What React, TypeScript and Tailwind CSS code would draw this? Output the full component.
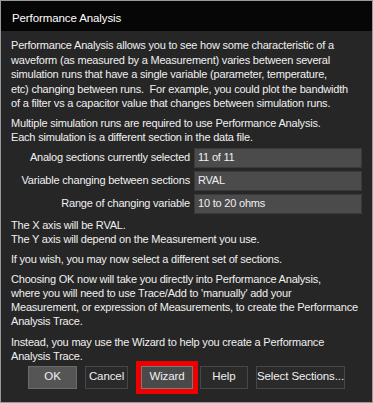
import React from "react";

const font = { fontFamily: '"Liberation Sans", Arial, sans-serif' };

function Row({ label, value }: { label: string; value: string }) {
  return (
    <>
      <div className="flex h-[20px] items-center justify-end whitespace-nowrap">{label}</div>
      <div className="flex h-[20px] items-center border border-[#3a3a3a] bg-[#4b4b4b] pl-[3px] whitespace-nowrap">
        {value}
      </div>
    </>
  );
}

function Btn({
  children,
  width,
  variant = "plain",
}: {
  children: React.ReactNode;
  width: string;
  variant?: "plain" | "default" | "focus";
}) {
  const styles = {
    plain: "bg-[#2a2a2a] border-[#474747]",
    default: "bg-[#555555] border-[#6a6a6a]",
    focus: "bg-[#4a4a4a] border-[#7a7a7a]",
  }[variant];
  return (
    <button
      type="button"
      className={`flex h-[23px] items-center justify-center whitespace-nowrap border ${styles} ${width} text-[11.5px] tracking-[-0.1px] text-[#f0f0f0]`}
      style={font}
    >
      {children}
    </button>
  );
}

export default function App() {
  return (
    <div
      className="flex h-[403px] w-[373px] flex-col border border-[#9a9a9a] bg-[#262626] text-[11px] tracking-[-0.2px] text-[#f0f0f0]"
      style={font}
    >
      <div className="flex h-[30px] shrink-0 items-center bg-[#060606] pl-[11px] pt-[5px] text-[11.5px] tracking-[-0.1px] text-white">
        Performance Analysis
      </div>
      <div className="flex flex-col px-[10px] pt-[7px]">
        <div className="leading-[14.5px] whitespace-nowrap">
          <div>Performance Analysis allows you to see how some characteristic of a</div>
          <div>waveform (as measured by a Measurement) varies between several</div>
          <div>simulation runs that have a single variable (parameter, temperature,</div>
          <div>etc) changing between runs.&nbsp; For example, you could plot the bandwidth</div>
          <div>of a filter vs a capacitor value that changes between simulation runs.</div>
        </div>
        <div className="mt-[5px] leading-[14px] whitespace-nowrap">
          <div>Multiple simulation runs are required to use Performance Analysis.</div>
          <div>Each simulation is a different section in the data file.</div>
        </div>
        <div className="mt-[4px] grid grid-cols-[179px_1fr] gap-x-[4px] gap-y-[3px]">
          <Row label="Analog sections currently selected" value="11 of 11" />
          <Row label="Variable changing between sections" value="RVAL" />
          <Row label="Range of changing variable" value="10 to 20 ohms" />
        </div>
        <div className="mt-[4px] leading-[14px] whitespace-nowrap">
          <div>The X axis will be RVAL.</div>
          <div>The Y axis will depend on the Measurement you use.</div>
        </div>
        <div className="mt-[6px] leading-[14px] whitespace-nowrap">
          If you wish, you may now select a different set of sections.
        </div>
        <div className="mt-[6px] leading-[14px] whitespace-nowrap">
          <div>Choosing OK now will take you directly into Performance Analysis,</div>
          <div>where you will need to use Trace/Add to 'manually' add your</div>
          <div>Measurement, or expression of Measurements, to create the Performance</div>
          <div>Analysis Trace.</div>
        </div>
        <div className="mt-[7px] leading-[14px] whitespace-nowrap">
          <div>Instead, you may use the Wizard to help you create a Performance</div>
          <div>Analysis Trace.</div>
        </div>
        <div className="ml-[17px] mt-[-2px] flex items-center">
          <Btn width="w-[49px]" variant="default">OK</Btn>
          <div className="ml-[8px]">
            <Btn width="w-[43px]">Cancel</Btn>
          </div>
          <div className="ml-[8px] border-[5px] border-[#ee0000]">
            <Btn width="w-[52px]" variant="focus">Wizard</Btn>
          </div>
          <div className="ml-[2px]">
            <Btn width="w-[48px]">Help</Btn>
          </div>
          <div className="ml-[8px]">
            <Btn width="w-[89px]">Select Sections...</Btn>
          </div>
        </div>
      </div>
    </div>
  );
}
